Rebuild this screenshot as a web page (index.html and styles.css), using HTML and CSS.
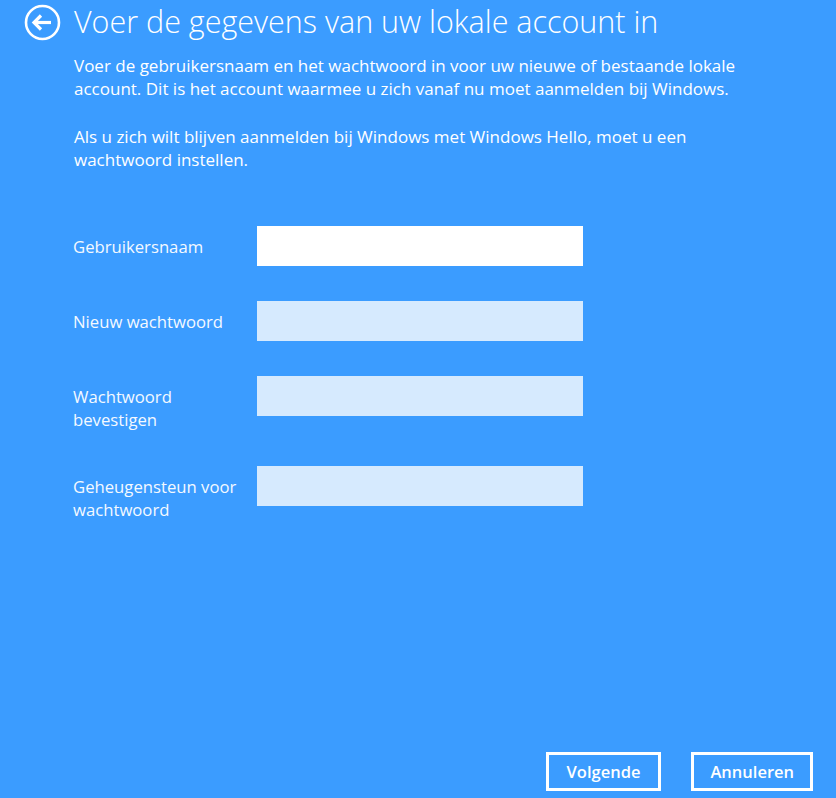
FILE: index.html
```html
<!DOCTYPE html>
<html lang="nl">
<head>
  <meta charset="UTF-8">
  <meta name="viewport" content="width=device-width, initial-scale=1.0">
  <link rel="stylesheet" href="styles.css">
</head>
<body>
<div id="page">
  <div class="header">
    <button class="back-button" aria-label="Terug">
      <svg width="37" height="37" viewBox="0 0 37 37">
        <circle cx="18.5" cy="18.5" r="16.5" fill="none" stroke="#fff" stroke-width="2.6"/>
        <path d="M10 18.5 H27" stroke="#fff" stroke-width="3.2" fill="none"/>
        <path d="M17 11.5 L10 18.5 L17 25.5" stroke="#fff" stroke-width="3.2" fill="none" stroke-linejoin="miter"/>
      </svg>
    </button>
    <h1>Voer de gegevens van uw lokale account in</h1>
  </div>

  <div class="intro">
    <p>Voer de gebruikersnaam en het wachtwoord in voor uw nieuwe of bestaande lokale account. Dit is het account waarmee u zich vanaf nu moet aanmelden bij Windows.</p>
    <p>Als u zich wilt blijven aanmelden bij Windows met Windows Hello, moet u een wachtwoord instellen.</p>
  </div>

  <div class="form">
    <div class="form-row">
      <label for="username">Gebruikersnaam</label>
      <input id="username" class="field field-active" type="text">
    </div>
    <div class="form-row">
      <label for="password">Nieuw wachtwoord</label>
      <input id="password" class="field" type="password">
    </div>
    <div class="form-row">
      <label for="password_confirm">Wachtwoord bevestigen</label>
      <input id="password_confirm" class="field" type="password">
    </div>
    <div class="form-row">
      <label for="hint">Geheugensteun voor wachtwoord</label>
      <input id="hint" class="field" type="text">
    </div>
  </div>

  <div class="footer">
    <button class="action">Volgende</button>
    <button class="action">Annuleren</button>
  </div>
</div>
</body>
</html>
```

FILE: styles.css
```css
html, body {
  margin: 0;
  padding: 0;
  height: 100%;
}

body {
  font-family: "Open Sans", "Noto Sans", sans-serif;
  background-color: #3b9cff;
  color: #fff;
}

#page {
  display: flex;
  flex-direction: column;
  height: 100vh;
  box-sizing: border-box;
}

.header {
  display: flex;
  align-items: flex-start;
  padding-left: 24px;
}

.back-button {
  display: block;
  width: 37px;
  height: 37px;
  margin-top: 4px;
  padding: 0;
  border: none;
  background: none;
  cursor: pointer;
}

.back-button svg {
  display: block;
}

h1 {
  margin: 1px 0 0 13px;
  font-size: 30.5px;
  font-weight: 300;
  line-height: 40px;
}

.intro {
  max-width: 690px;
  padding-left: 74px;
  margin-top: 13px;
}

.intro p {
  margin: 0 0 25px 0;
  font-size: 17px;
  line-height: 23px;
}

.form {
  padding-left: 73px;
  margin-top: 29.5px;
}

.form-row {
  display: flex;
  align-items: flex-start;
  margin-bottom: 35px;
}

.form-row label {
  width: 172px;
  margin-right: 12px;
  padding-top: 9px;
  font-size: 16.7px;
  line-height: 23px;
  color: #f4f9ff;
}

.field {
  width: 326px;
  height: 40px;
  margin: 0;
  padding: 0 10px;
  border: none;
  border-radius: 0;
  box-sizing: border-box;
  background-color: #d6eafe;
  font-family: inherit;
  font-size: 16px;
  outline: none;
}

.field-active {
  background-color: #fff;
}

.footer {
  display: flex;
  justify-content: flex-end;
  gap: 30px;
  margin-top: auto;
  padding: 0 23px 7px 0;
}

.action {
  height: 39px;
  padding: 0 16px;
  border: 3px solid #fff;
  background: transparent;
  color: #fff;
  font-family: inherit;
  font-size: 16.5px;
  font-weight: 600;
  cursor: pointer;
}

.action:first-child {
  padding: 0 18px;
}
```
